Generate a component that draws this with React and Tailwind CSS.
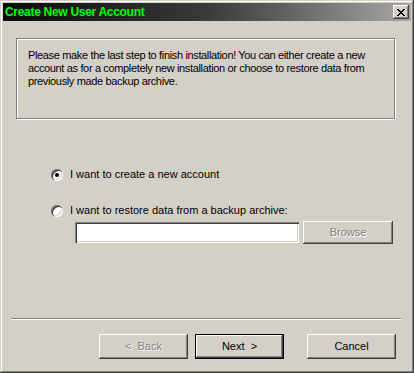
import React from 'react';

const font = { fontFamily: '"Liberation Sans", Arial, sans-serif' };

// classic raised bevel used by the dialog buttons
const raised =
  'bg-[#d4d0c8] shadow-[inset_-1px_-1px_#404040,inset_1px_1px_#ffffff,inset_-2px_-2px_#808080,inset_2px_2px_#d4d0c8]';

function Radio({ checked }) {
  return (
    <span className="relative flex h-3 w-3 shrink-0 items-center justify-center rounded-full bg-white shadow-[inset_1px_1px_#808080,inset_2px_2px_#404040,inset_-1px_-1px_#ffffff,inset_-2px_-2px_#d4d0c8]">
      {checked && <span className="h-1 w-1 rounded-full bg-black" />}
    </span>
  );
}

function Button({ children, disabled, primary, className = '' }) {
  const label = (
    <span className={disabled ? 'text-[#808080] [text-shadow:1px_1px_#ffffff]' : 'text-black'}>
      {children}
    </span>
  );
  if (primary) {
    return (
      <div className={`flex border border-black ${className}`}>
        <div className={`flex flex-1 items-center justify-center ${raised}`}>{label}</div>
      </div>
    );
  }
  return (
    <div className={`flex items-center justify-center ${raised} ${className}`}>{label}</div>
  );
}

export default function App() {
  return (
    <div
      className="flex h-[373px] w-[414px] flex-col bg-[#d4d0c8] p-[3px] text-[11px] leading-[13px] text-black shadow-[inset_-1px_-1px_#404040,inset_1px_1px_#d4d0c8,inset_-2px_-2px_#808080,inset_2px_2px_#ffffff]"
      style={font}
    >
      {/* Barre de titre */}
      <div className="flex h-[18px] items-center bg-gradient-to-r from-[#0c0c0c] via-[#3a3a3a] to-[#a8a8a8] pl-[2px] pr-[2px]">
        <span className="text-[12px] font-bold tracking-[-0.3px] text-[#00ff00]">Create New User Account</span>
        <div className={`ml-auto flex h-[14px] w-[16px] items-center justify-center ${raised}`}>
          <svg width="8" height="7" viewBox="0 0 8 7" shapeRendering="crispEdges">
            <path
              d="M0 0h2v1H0zM6 0h2v1H6zM1 1h2v1H1zM5 1h2v1H5zM2 2h4v1H2zM3 3h2v1H3zM2 4h4v1H2zM1 5h2v1H1zM5 5h2v1H5zM0 6h2v1H0zM6 6h2v1H6z"
              fill="#000"
            />
          </svg>
        </div>
      </div>

      {/* Contenu */}
      <div className="flex flex-1 flex-col">
        <div className="ml-[13px] mt-[17px] h-[81px] w-[379px] whitespace-nowrap border border-[#808080] px-[11px] pt-[10px] tracking-[-0.35px] shadow-[1px_1px_#ffffff,inset_1px_1px_#ffffff]">
          Please make the last step to finish installation! You can either create a new
          <br />
          account as for a completely new installation or choose to restore data from
          <br />
          previously made backup archive.
        </div>

        <div className="ml-[48px] mt-[49px] flex items-center gap-[7px]">
          <Radio checked />
          <span>I want to create a new account</span>
        </div>

        <div className="ml-[48px] mt-[23px] flex items-center gap-[7px]">
          <Radio />
          <span>I want to restore data from a backup archive:</span>
        </div>

        <div className="ml-[72px] mt-[4px] flex items-center gap-[4px]">
          <div className="h-[21px] w-[224px] bg-white shadow-[inset_1px_1px_#808080,inset_2px_2px_#404040,inset_-1px_-1px_#ffffff,inset_-2px_-2px_#d4d0c8]" />
          <Button disabled className="h-[23px] w-[90px]">
            Browse
          </Button>
        </div>

        <div className="mt-auto ml-[8px] w-[390px] border-t border-b border-t-[#808080] border-b-white" />

        <div className="mt-[14px] mb-[11px] ml-[96px] flex">
          <Button disabled className="h-[25px] w-[89px]">
            &lt;&nbsp;&nbsp;Back
          </Button>
          <Button primary className="ml-[7px] h-[25px] w-[89px]">
            Next&nbsp;&nbsp;&gt;
          </Button>
          <Button className="ml-[23px] h-[25px] w-[89px]">Cancel</Button>
        </div>
      </div>
    </div>
  );
}
